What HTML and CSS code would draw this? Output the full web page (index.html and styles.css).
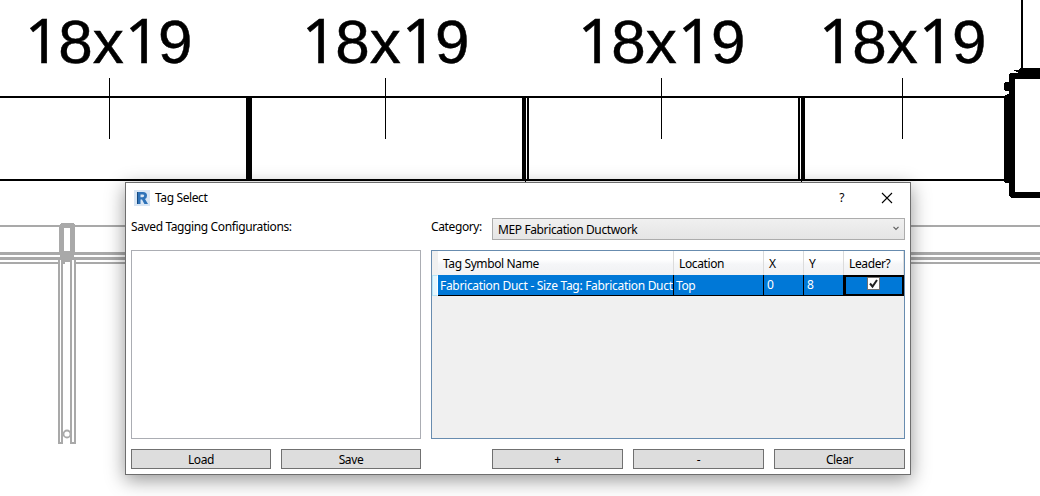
FILE: index.html
```html
<!DOCTYPE html>
<html lang="en">
<head>
<meta charset="utf-8">
<title>Tag Select</title>
<link rel="stylesheet" href="styles.css">
</head>
<body>
<main class="workspace">
  <svg class="drawing" viewBox="0 0 1040 496" width="1040" height="496">
    <g class="far" shape-rendering="crispEdges">
      <rect x="0" y="225" width="1040" height="2"/>
      <rect x="0" y="252" width="1040" height="3"/>
      <rect x="0" y="257" width="1040" height="3"/>
      <rect x="0" y="262" width="1040" height="2"/>
      <path class="paper" d="M60 260h15v183h-15z"/>
      <path d="M61 223H73L75 225V252L74 257L72 260V262H62V260L60 257L59 252V225z"/>
      <path class="paper" d="M64 228h6v23h-6z"/>
      <path d="M58 260h2v184h-2zM61 260h2v184h-2zM70 260h2v184h-2zM74 260h2v184h-2zM58 442h5v2h-5zM70 442h6v2h-6zM63 260h2v4h-2z"/>
      <circle class="ring" cx="67" cy="434" r="3.500"/>
    </g>
    <g class="ink" shape-rendering="crispEdges">
      <rect x="0" y="96" width="1005" height="2"/>
      <rect x="0" y="179" width="1005" height="2"/>
      <rect x="246" y="97" width="6" height="83"/>
      <path d="M522 97h4v83h-4zM527 97h2v83h-2zM525 180h1v2h-1z"/>
      <path d="M798 97h2v83h-2zM801 97h4v83h-4zM801 180h1v2h-1z"/>
      <path d="M109 78h1v61h-1zM385 78h1v61h-1zM661 78h1v61h-1zM902 78h1v61h-1z"/>
      <path d="M1021 0h2v69h-2z"/>
      <path d="M1040 68H1020V69H1019V70H1014V71H1016V72H1018V73H1010V74H1009V82H1005V83H1004V90H1005V91H1009V94H1007V95H1005V96H1004V182H1005V183H1009V196L1011 198H1040V192H1015V79H1040z"/>
    </g>
    <g class="size-tags">
      <text x="24.700" y="63"><tspan class="one">1</tspan>8x<tspan class="one" dx="1">1</tspan>9</text>
      <text x="301.700" y="63"><tspan class="one">1</tspan>8x<tspan class="one" dx="1">1</tspan>9</text>
      <text x="577.700" y="63"><tspan class="one">1</tspan>8x<tspan class="one" dx="1">1</tspan>9</text>
      <text x="818.700" y="63"><tspan class="one">1</tspan>8x<tspan class="one" dx="1">1</tspan>9</text>
    </g>
  </svg>

  <section class="dialog">
    <header class="titlebar">
      <svg class="app-icon" viewBox="0 0 16 16" width="16" height="16">
        <rect width="16" height="16" fill="#d9e6f4"/>
        <path d="M3 2h3v12h-3z" fill="#174a80"/>
        <path d="M4 2h5q4 0 4 3.700q0 2.500-2 3.300l3 5h-3.600l-2.400-4.500h-1.500v4.500h-2.500zM6.500 4.500v2.700h2q1.700 0 1.700-1.400t-1.700-1.300z" fill="#2e72b8" fill-rule="evenodd"/>
      </svg>
      <h1 class="title">Tag Select</h1>
      <span class="help">?</span>
      <svg class="close" viewBox="0 0 10 10" width="10" height="10"><path d="M0 0L10 10M10 0L0 10"/></svg>
    </header>
    <div class="content">
      <div class="saved">
        <div class="label">Saved Tagging Configurations:</div>
        <div class="saved-list"></div>
        <div class="buttons"><button>Load</button><button>Save</button></div>
      </div>
      <div class="tags">
        <div class="category">
          <div class="label">Category:</div>
          <div class="combo"><span>MEP Fabrication Ductwork</span>
            <svg class="chevron" viewBox="0 0 6 5" width="6" height="5"><path d="M.5 .8L3 3.400L5.500 .8"/></svg>
          </div>
        </div>
        <div class="grid">
          <div class="row head"><i></i><span>Tag Symbol Name</span><span>Location</span><span>X</span><span>Y</span><span>Leader?</span></div>
          <div class="row selected"><i></i><span class="name">Fabrication Duct - Size Tag: Fabrication Duct</span><span class="location">Top</span><span>0</span><span>8</span><span class="focus"><svg class="check" viewBox="0 0 13 13" width="13" height="13"><rect x=".5" y=".5" width="12" height="12"/><path d="M3 6.500L5.500 9.500L10 3"/></svg></span></div>
        </div>
        <div class="buttons actions"><button>+</button><button>-</button><button>Clear</button></div>
      </div>
    </div>
  </section>
</main>
</body>
</html>
```
FILE: styles.css
```css
* { box-sizing: border-box; }
body { margin: 0; background: #fff; }
.workspace {
  position: relative;
  width: 1040px;
  height: 496px;
  overflow: hidden;
  font: 12px/16px "Noto Sans", sans-serif;
  letter-spacing: -0.38px;
  color: #000;
}
.drawing { display: block; }
.far { fill: #a9a9a9; }
.far .paper { fill: #fff; }
.ring { fill: #fff; stroke: #a9a9a9; stroke-width: 1.8; shape-rendering: geometricPrecision; }
.size-tags {
  font: 62px "Liberation Sans", sans-serif;
  letter-spacing: 0;
  stroke: #000;
  stroke-width: .5;
}
.one { font-family: "Noto Sans", sans-serif; letter-spacing: -2px; }

.dialog {
  position: absolute;
  left: 125px;
  top: 182px;
  width: 786px;
  height: 293px;
  background: #fff;
  border: 1px solid #6e6e6e;
  box-shadow: 0 5px 18px rgba(0, 0, 0, .42);
}
.titlebar { display: flex; align-items: center; height: 30px; padding: 0 18px 0 8px; }
.title { flex: 1; margin: 0 0 0 5px; font-size: 12px; font-weight: 400; }
.help { margin-right: 38px; }
.close { stroke: #000; stroke-width: 1.1; overflow: visible; }
.content { display: flex; gap: 10px; padding: 5px; height: 261px; }
.saved { width: 290px; display: flex; flex-direction: column; }
.label { height: 32px; padding-top: 1px; }
.saved-list { height: 189px; border: 1px solid #abadb3; }
.buttons { display: flex; gap: 10px; margin-top: 10px; }
button {
  flex: 1;
  height: 20px;
  padding: 2px 0 0;
  border: 1px solid #707070;
  background: #ddd;
  font: inherit;
  line-height: 16px;
  letter-spacing: inherit;
  color: #000;
}
.tags { width: 474px; }
.category { display: flex; height: 32px; }
.category .label { width: 61px; }
.combo {
  display: flex;
  align-items: center;
  justify-content: space-between;
  width: 413px;
  height: 22px;
  padding: 2px 5px 0;
  border: 1px solid #acacac;
  background: linear-gradient(#f0f0f0, #e5e5e5);
}
.chevron { fill: none; stroke: #606060; stroke-width: 1.2; margin-bottom: 3px; }
.grid { height: 189px; border: 1px solid #688caf; background: #f0f0f0; }
.row { display: grid; grid-template-columns: 6px 236px 90px 40px 40px 60px; }
.head { height: 24px; background: linear-gradient(#fff 0%, #fff 35%, #f5f6f8 55%, #f0f1f3 100%); }
.head i { background: #f0f0f0; }
.head span { border-right: 1px solid #dcdcdc; padding: 5px 0 0 5px; }
.selected { height: 21px; color: #fff; }
.selected i { background: #e4f6fd; border: 1px solid #b5e5f8; border-right-color: #fff; }
.selected span {
  background: #0078d7;
  border-right: 1px solid #000;
  border-bottom: 1px solid #000;
  padding: 2px 0 0 3px;
  white-space: nowrap;
  overflow: hidden;
}
.selected .name, .selected .location { padding: 3px 0 0 2px; }
.selected .name { letter-spacing: -0.3px; }
.selected .focus { border: 2px solid #000; padding: 0 1px 0 0; display: flex; justify-content: center; }
.check { fill: #fff; stroke: #707070; }
.check path { fill: none; stroke: #212121; stroke-width: 2; }
.actions { padding-left: 61px; }
```
